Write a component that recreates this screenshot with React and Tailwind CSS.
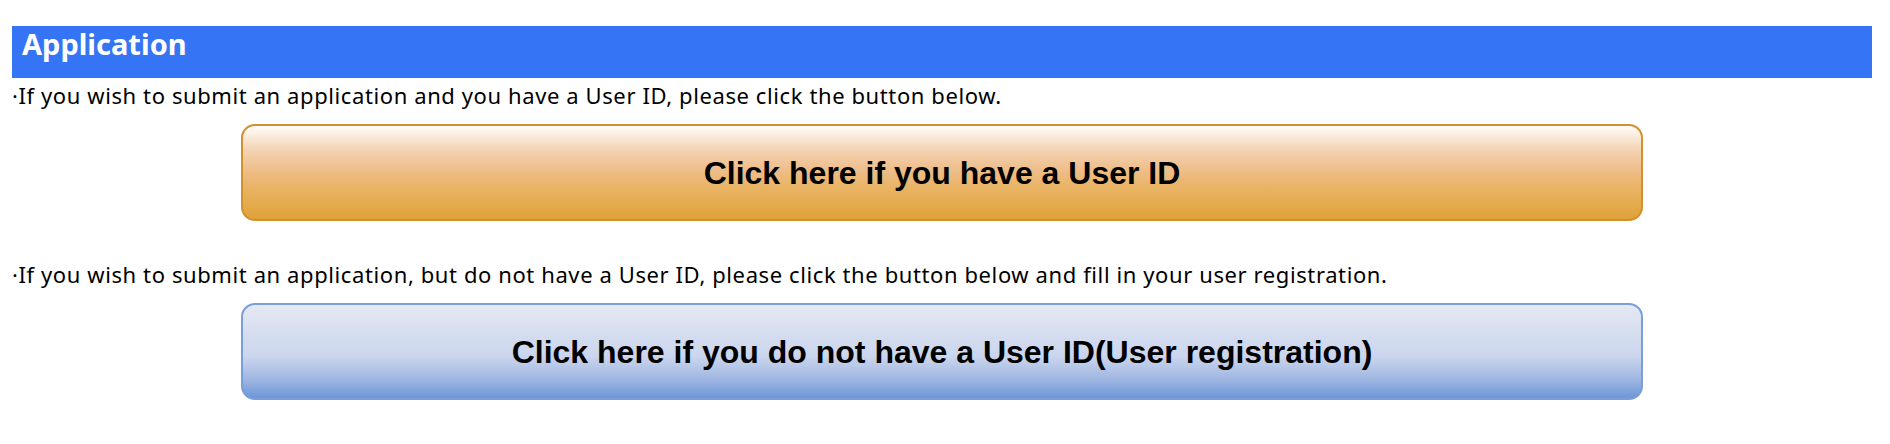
export default function App() {
    return (
        <div className="min-h-screen bg-white pt-[26px] pl-3 pr-[18px] font-['Noto_Sans',sans-serif] text-black">
            <div className="h-[52px] bg-[#3575f5] flex items-start pt-[3px] px-[10px]">
                <h2 className="text-[29px] font-bold text-white leading-none">Application</h2>
            </div>

            <p className="text-[22px] tracking-[0.6px] leading-[30px] mt-[2px]">·If you wish to submit an application and you have a User ID, please click the button below.</p>
            <div className="flex justify-center mt-[14px]">
                <button className="w-[1402px] h-[97px] rounded-[14px] border-2 border-[#d3902e] bg-[linear-gradient(to_bottom,#fffdfa_0%,#f4d4b4_25%,#efbf8e_45%,#e9b466_65%,#e0a238_100%)] font-['Liberation_Sans',Arial,sans-serif] font-bold text-[32px] text-black">
                    Click here if you have a User ID
                </button>
            </div>

            <p className="text-[22px] tracking-[0.6px] leading-[30px] mt-[38px]">·If you wish to submit an application, but do not have a User ID, please click the button below and fill in your user registration.</p>
            <div className="flex justify-center mt-[14px]">
                <button className="w-[1402px] h-[97px] rounded-[14px] border-2 border-[#7a9edb] bg-[linear-gradient(to_bottom,#e6e9f3_0%,#d5ddef_30%,#cbd6ee_55%,#9fb6e2_80%,#6d97d7_100%)] font-['Liberation_Sans',Arial,sans-serif] font-bold text-[32px] text-black">
                    Click here if you do not have a User ID(User registration)
                </button>
            </div>
        </div>
    );
}
